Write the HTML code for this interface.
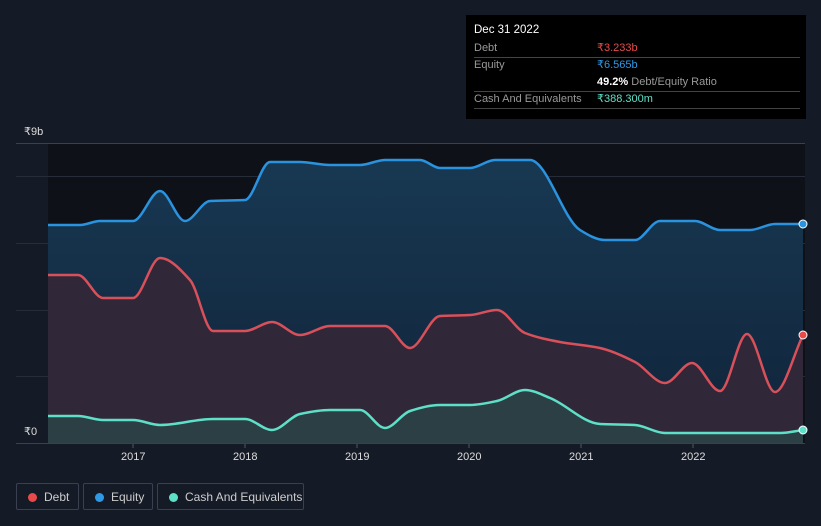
<!DOCTYPE html>
<html><head><style>
body{margin:0;width:821px;height:526px;background:#151b26;font-family:"Liberation Sans",sans-serif;overflow:hidden;position:relative}
.tip{position:absolute;left:466px;top:15px;width:340px;height:104px;background:#000;color:#fff;font-size:11px}
.tip .r{position:absolute;left:8px;width:326px;border-bottom:1px solid #444;height:17px;line-height:17px}
.tip .l{color:#999}
.tip .v{position:absolute;left:123px;top:0}
.leg{position:absolute;top:483px;height:27px;border:1px solid #3a4050;border-radius:2px;color:#ccc;font-size:12px;line-height:27px;box-sizing:border-box}
.leg i{position:absolute;left:11px;top:9px;width:9px;height:9px;border-radius:50%}
.leg span{position:absolute;left:27px}
.ax{position:absolute;color:#ddd;font-size:11px}
</style></head><body>
<div class="tip">
<div style="position:absolute;left:8px;top:9px;font-size:11.5px">Dec 31 2022</div>
<div class="r" style="top:25px"><span class="l">Debt</span><span class="v" style="color:#e84a4a">₹3.233b</span></div>
<div class="r" style="top:42px;border:none"><span class="l">Equity</span><span class="v" style="color:#2e9ae6">₹6.565b</span></div>
<div class="r" style="top:59px"><span class="v"><b>49.2%</b> <span class="l">Debt/Equity Ratio</span></span></div>
<div class="r" style="top:76px"><span class="l">Cash And Equivalents</span><span class="v" style="color:#5ee0c8">₹388.300m</span></div>
</div>
<div class="ax" style="left:24px;top:125px">₹9b</div>
<svg style="position:absolute;left:0;top:0" width="821" height="526">
<defs><linearGradient id="eg" x1="0" y1="0" x2="0" y2="1"><stop offset="0" stop-color="#183852"/><stop offset="1" stop-color="#10243a"/></linearGradient></defs>
<rect x="48" y="143" width="757" height="300" fill="#0e1118"/>
<g stroke="#262c38" stroke-width="1"><line x1="16" y1="176.5" x2="805" y2="176.5"/><line x1="16" y1="243.5" x2="805" y2="243.5"/><line x1="16" y1="310.5" x2="805" y2="310.5"/><line x1="16" y1="376.5" x2="805" y2="376.5"/></g>
<line x1="16" y1="143.5" x2="805" y2="143.5" stroke="#3a404c"/>
<path id="ef" fill="url(#eg)"/>
<path id="df" fill="#302838"/>
<path id="cf" fill="#2c3f45"/>
<g fill="none" stroke-width="2.5" stroke-linejoin="round">
<path id="el" stroke="#2a93e0"/><path id="dl" stroke="#d9505a"/><path id="cl" stroke="#5ee0c8"/>
</g>
<circle cx="803" cy="224" r="4" fill="#2a93e0" stroke="#fff" stroke-width="1"/>
<circle cx="803" cy="335" r="4" fill="#e84a4a" stroke="#fff" stroke-width="1"/>
<circle cx="803" cy="430" r="4" fill="#5ee0c8" stroke="#fff" stroke-width="1"/>
<line x1="16" y1="443.5" x2="805" y2="443.5" stroke="#3a4050"/>
<g stroke="#555"><line x1="133" y1="444" x2="133" y2="448"/><line x1="245" y1="444" x2="245" y2="448"/><line x1="357" y1="444" x2="357" y2="448"/><line x1="469" y1="444" x2="469" y2="448"/><line x1="581" y1="444" x2="581" y2="448"/><line x1="693" y1="444" x2="693" y2="448"/></g>
</svg>
<script>
function sm(s){var p=s.trim().split(/\s+/).map(function(t){return t.split(',').map(Number)});var n=p.length,dx=[],m=[],t=[];
for(var i=0;i<n-1;i++){dx[i]=p[i+1][0]-p[i][0];m[i]=(p[i+1][1]-p[i][1])/dx[i];}
t[0]=m[0];t[n-1]=m[n-2];
for(i=1;i<n-1;i++){if(m[i-1]*m[i]<=0)t[i]=0;else t[i]=2/(1/m[i-1]+1/m[i])*1;}
var d='M'+p[0][0]+','+p[0][1];
for(i=0;i<n-1;i++){var h=dx[i]/3;d+=' C'+(p[i][0]+h)+','+(p[i][1]+t[i]*h)+' '+(p[i+1][0]-h)+','+(p[i+1][1]-t[i+1]*h)+' '+p[i+1][0]+','+p[i+1][1];}
return d;}
var E="48,225 80,225 100,221 133,221 160,191 185,221 210,201 245,200 270,162 300,162 330,165 360,165 385,160 420,160 440,168 470,168 495,160 530,160 580,230 605,240 635,240 660,221 695,221 720,230 750,230 775,224 803,224";
var D="48,275 78,275 103,298 133,298 160,258 190,280 213,331 245,331 272,322 300,335 330,326 385,326 410,348 440,316 470,315 497,310 525,333 560,342 600,348 635,362 665,383 692,363 720,391 747,334 775,392 803,335";
var C="48,416 78,416 103,420 133,420 160,425 213,419 245,419 272,430 300,414 330,410 360,410 385,428 410,411 440,405 470,405 497,401 525,390 550,398 600,424 635,425 665,433 780,433 803,430";
[['e',E],['d',D],['c',C]].forEach(function(k){var d=sm(k[1]);document.getElementById(k[0]+'l').setAttribute('d',d);document.getElementById(k[0]+'f').setAttribute('d',d+' L803,443 L48,443 Z');});
</script>
<div class="ax" style="left:24px;top:425px">₹0</div>
<div class="ax" style="left:121px;top:451px">2017</div>
<div class="ax" style="left:233px;top:451px">2018</div>
<div class="ax" style="left:345px;top:451px">2019</div>
<div class="ax" style="left:457px;top:451px">2020</div>
<div class="ax" style="left:569px;top:451px">2021</div>
<div class="ax" style="left:681px;top:451px">2022</div>
<div class="leg" style="left:16px;width:63px"><i style="background:#e84a4a"></i><span>Debt</span></div>
<div class="leg" style="left:83px;width:70px"><i style="background:#2e9ae6"></i><span>Equity</span></div>
<div class="leg" style="left:157px;width:147px"><i style="background:#5ee0c8"></i><span>Cash And Equivalents</span></div>
</body></html>
